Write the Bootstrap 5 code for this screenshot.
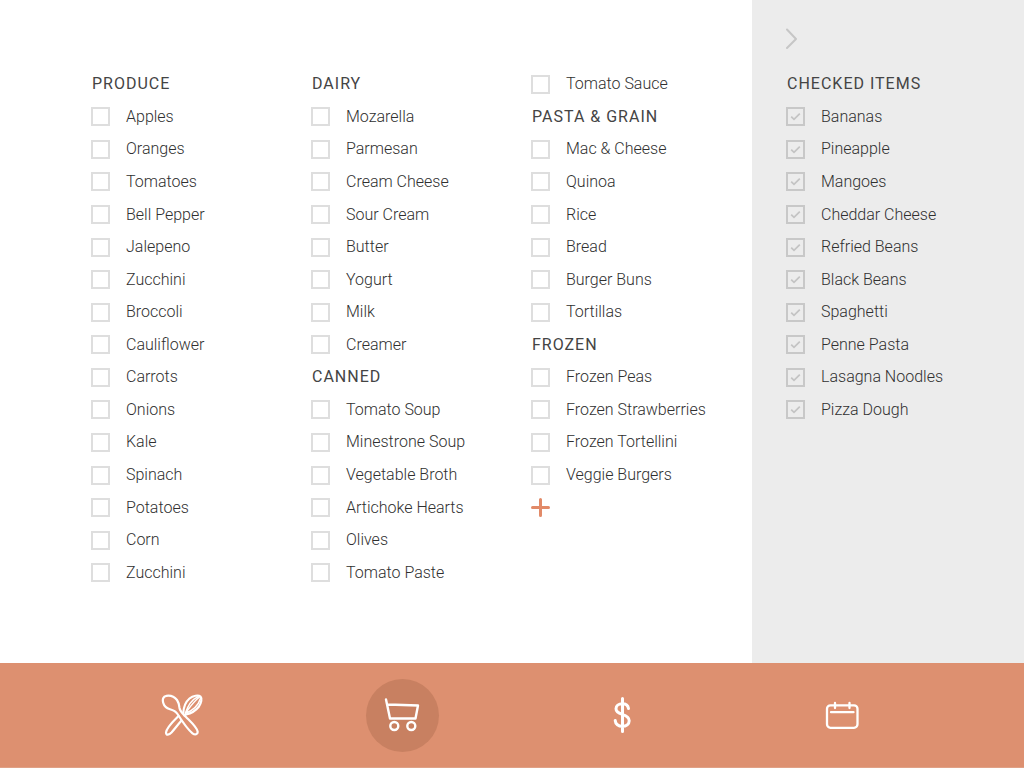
<!DOCTYPE html>
<html lang="en">
<head>
<meta charset="utf-8">
<meta name="viewport" content="width=device-width, initial-scale=1">
<title>Shopping list</title>
<link href="https://cdn.jsdelivr.net/npm/bootstrap@5.3.0/dist/css/bootstrap.min.css" rel="stylesheet">
<style>
  body { font-family: Roboto, "Liberation Sans", sans-serif; font-size: 16px; font-weight: 300; line-height: 20px; color: #303030; background: #fff; }
  .lists { padding: 68px 1px 74px 91px; }
  .checked-panel { width: 272px; padding: 68px 34px 74px; background: #ececec; }
  .rows { display: grid; grid-template-rows: repeat(16, minmax(28px, 1fr)); align-items: center; }
  .rows h2 { margin: 0; padding-left: 1px; font-size: 16px; font-weight: 400; line-height: 20px; letter-spacing: 1px; text-transform: uppercase; color: #444; }
  .rows label { display: flex; align-items: center; gap: 16px; white-space: nowrap; cursor: pointer; }
  .rows .form-check-input { flex: none; width: 19px; height: 19px; margin: 0; border: 2px solid #dedede; border-radius: 0; background-color: #fff; box-shadow: none; }
  .rows .form-check-input:checked { border-color: #c8c8c8; background-color: transparent; background-size: 15px 15px;
    background-image: url("data:image/svg+xml,%3Csvg xmlns='http://www.w3.org/2000/svg' viewBox='0 0 15 15'%3E%3Cpath d='M3.2 7.6l2.8 2.7 5.8-5.6' fill='none' stroke='%23c4c4c4' stroke-width='1.8'/%3E%3C/svg%3E"); }
  .add-icon { color: #e28a68; }
  .collapse-btn { position: absolute; top: 28px; left: 34px; line-height: 0; color: #c6c6c6; }
  .tabs { min-height: 105px; padding: 0 72px; background: #dd9070; border-bottom: 1px solid #e0a186; }
  .tabs a { width: 73px; height: 73px; color: #fff; }
  .tabs a.active { background: #c88061; }
  svg { fill: none; stroke: currentColor; stroke-linecap: round; stroke-linejoin: round; }
</style>
</head>
<body class="d-flex flex-column min-vh-100">
<main class="d-flex flex-grow-1">
  <div class="lists row row-cols-3 g-0 flex-grow-1">
    <ul class="col rows list-unstyled mb-0">
      <li><h2>Produce</h2></li>
      <li><label><input class="form-check-input" type="checkbox">Apples</label></li>
      <li><label><input class="form-check-input" type="checkbox">Oranges</label></li>
      <li><label><input class="form-check-input" type="checkbox">Tomatoes</label></li>
      <li><label><input class="form-check-input" type="checkbox">Bell Pepper</label></li>
      <li><label><input class="form-check-input" type="checkbox">Jalepeno</label></li>
      <li><label><input class="form-check-input" type="checkbox">Zucchini</label></li>
      <li><label><input class="form-check-input" type="checkbox">Broccoli</label></li>
      <li><label><input class="form-check-input" type="checkbox">Cauliflower</label></li>
      <li><label><input class="form-check-input" type="checkbox">Carrots</label></li>
      <li><label><input class="form-check-input" type="checkbox">Onions</label></li>
      <li><label><input class="form-check-input" type="checkbox">Kale</label></li>
      <li><label><input class="form-check-input" type="checkbox">Spinach</label></li>
      <li><label><input class="form-check-input" type="checkbox">Potatoes</label></li>
      <li><label><input class="form-check-input" type="checkbox">Corn</label></li>
      <li><label><input class="form-check-input" type="checkbox">Zucchini</label></li>
    </ul>
    <ul class="col rows list-unstyled mb-0">
      <li><h2>Dairy</h2></li>
      <li><label><input class="form-check-input" type="checkbox">Mozarella</label></li>
      <li><label><input class="form-check-input" type="checkbox">Parmesan</label></li>
      <li><label><input class="form-check-input" type="checkbox">Cream Cheese</label></li>
      <li><label><input class="form-check-input" type="checkbox">Sour Cream</label></li>
      <li><label><input class="form-check-input" type="checkbox">Butter</label></li>
      <li><label><input class="form-check-input" type="checkbox">Yogurt</label></li>
      <li><label><input class="form-check-input" type="checkbox">Milk</label></li>
      <li><label><input class="form-check-input" type="checkbox">Creamer</label></li>
      <li><h2>Canned</h2></li>
      <li><label><input class="form-check-input" type="checkbox">Tomato Soup</label></li>
      <li><label><input class="form-check-input" type="checkbox">Minestrone Soup</label></li>
      <li><label><input class="form-check-input" type="checkbox">Vegetable Broth</label></li>
      <li><label><input class="form-check-input" type="checkbox">Artichoke Hearts</label></li>
      <li><label><input class="form-check-input" type="checkbox">Olives</label></li>
      <li><label><input class="form-check-input" type="checkbox">Tomato Paste</label></li>
    </ul>
    <ul class="col rows list-unstyled mb-0">
      <li><label><input class="form-check-input" type="checkbox">Tomato Sauce</label></li>
      <li><h2>Pasta &amp; Grain</h2></li>
      <li><label><input class="form-check-input" type="checkbox">Mac &amp; Cheese</label></li>
      <li><label><input class="form-check-input" type="checkbox">Quinoa</label></li>
      <li><label><input class="form-check-input" type="checkbox">Rice</label></li>
      <li><label><input class="form-check-input" type="checkbox">Bread</label></li>
      <li><label><input class="form-check-input" type="checkbox">Burger Buns</label></li>
      <li><label><input class="form-check-input" type="checkbox">Tortillas</label></li>
      <li><h2>Frozen</h2></li>
      <li><label><input class="form-check-input" type="checkbox">Frozen Peas</label></li>
      <li><label><input class="form-check-input" type="checkbox">Frozen Strawberries</label></li>
      <li><label><input class="form-check-input" type="checkbox">Frozen Tortellini</label></li>
      <li><label><input class="form-check-input" type="checkbox">Veggie Burgers</label></li>
      <li class="d-flex"><button type="button" class="add-icon btn border-0 p-0 lh-1 d-flex" aria-label="Add item">
        <svg width="19" height="19" viewBox="0 0 19 19" stroke-width="3"><path d="M9.5 1.5v16M1.5 9.5h16"/></svg>
      </button></li>
    </ul>
  </div>
  <aside class="checked-panel position-relative flex-shrink-0 d-flex">
    <button type="button" class="collapse-btn btn border-0 p-0" aria-label="Hide checked items">
      <svg width="12" height="22" viewBox="0 0 12 22" stroke-width="2"><path d="M1 1.5l9 9.5L1 20"/></svg>
    </button>
    <ul class="rows list-unstyled mb-0">
      <li><h2>Checked Items</h2></li>
      <li><label><input class="form-check-input" type="checkbox" checked>Bananas</label></li>
      <li><label><input class="form-check-input" type="checkbox" checked>Pineapple</label></li>
      <li><label><input class="form-check-input" type="checkbox" checked>Mangoes</label></li>
      <li><label><input class="form-check-input" type="checkbox" checked>Cheddar Cheese</label></li>
      <li><label><input class="form-check-input" type="checkbox" checked>Refried Beans</label></li>
      <li><label><input class="form-check-input" type="checkbox" checked>Black Beans</label></li>
      <li><label><input class="form-check-input" type="checkbox" checked>Spaghetti</label></li>
      <li><label><input class="form-check-input" type="checkbox" checked>Penne Pasta</label></li>
      <li><label><input class="form-check-input" type="checkbox" checked>Lasagna Noodles</label></li>
      <li><label><input class="form-check-input" type="checkbox" checked>Pizza Dough</label></li>
    </ul>
  </aside>
</main>
<nav class="tabs d-flex align-items-center justify-content-around" aria-label="Main">
  <a href="#recipes" class="d-flex align-items-center justify-content-center rounded-circle" aria-label="Recipes">
    <svg width="42" height="42" viewBox="0 0 42 42" stroke-width="2.2">
      <path d="M18.500 14C18 10.500 17.800 8.500 16 6C13.500 2.800 9 1.300 5.500 1.800C2 2.300 1.300 5.500 2.200 8.800C3.200 12.500 5.500 14.300 9 15.300C12.500 16.300 14.500 17 16.500 20C20 25.500 26 35 31.500 39.300C34 41.200 37 40.700 36.600 37.500C36 33.500 30 28 25.500 23.500C21.500 19.500 19.300 18 18.500 14Z"/>
      <path d="M17.500 22C13 26.500 5.500 33.500 5 38.500C5 41.500 8 41.200 10.500 38.500C14 34.500 17 30.500 20.500 26.500"/>
      <path d="M22.300 19C22.500 13.500 24.500 8 28.500 4.500C32 1.500 37.500 .8 39.500 2.500C41.300 4.500 40.300 9 38 12.500C34.500 17 29.500 19.500 25 20.500L23.500 21.500"/>
      <path d="M24.200 19.500C26 14 29 6.500 36.500 2.800M24.200 19.500C29.500 17.500 37 12.500 39.500 4.500M24.200 19.500C28 14.500 32 8 38.500 3" stroke-width="1.500"/>
    </svg>
  </a>
  <a href="#shopping" class="active d-flex align-items-center justify-content-center rounded-circle" aria-label="Shopping list" aria-current="page">
    <svg width="36" height="36" viewBox="0 0 36 36" stroke-width="2.4">
      <path d="M2 2.500L6 21.500H31.500L34 8.500L3.800 7.500"/>
      <circle cx="10.300" cy="29" r="4"/><circle cx="27.300" cy="29" r="4"/>
    </svg>
  </a>
  <a href="#budget" class="d-flex align-items-center justify-content-center rounded-circle" aria-label="Budget">
    <svg width="20" height="38" viewBox="0 0 20 38" stroke-width="3">
      <path d="M10.500 2.500v33M16.500 12.500C16 9.500 13.500 7.800 10.300 7.800C6.600 7.800 4 9.800 4 12.700C4 16 6.700 17.200 10.400 18.400C14.400 19.700 17.200 21.200 17.200 24.800C17.200 28 14.300 30.300 10.400 30.300C6.300 30.300 3.500 28 3.200 24.500"/>
    </svg>
  </a>
  <a href="#calendar" class="d-flex align-items-center justify-content-center rounded-circle" aria-label="Calendar">
    <svg width="34" height="28" viewBox="0 0 34 28" stroke-width="2.3">
      <rect x="2" y="4.300" width="30.500" height="22.500" rx="3.500"/>
      <path d="M6 11.200H28.500M10 2v5M24.500 2v5"/>
    </svg>
  </a>
</nav>
<script src="https://cdn.jsdelivr.net/npm/bootstrap@5.3.0/dist/js/bootstrap.bundle.min.js"></script>
</body>
</html>
